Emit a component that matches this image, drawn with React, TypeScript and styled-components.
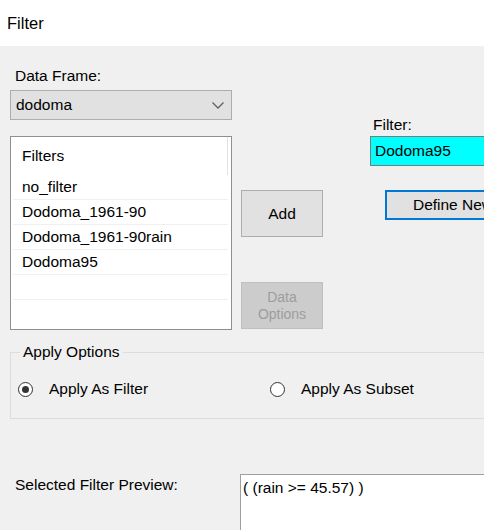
import styled, { createGlobalStyle } from 'styled-components'

// Base: Windows-ish dialog, Arial-width sans
const font = '"Liberation Sans", Arial, sans-serif'

const GlobalStyle = createGlobalStyle`
  html, body {
    margin: 0;
    padding: 0;
    background: #f0f0f0;
  }
  body {
    font-family: ${font};
    font-size: 15.5px;
    color: #000;
  }
`

const Window = styled.div`
  width: 484px;
  height: 530px;
  overflow: hidden;
  background: #f0f0f0;
`

const TitleBar = styled.div`
  height: 46px;
  display: flex;
  align-items: center;
  padding-left: 7px;
  background: #fff;
  font-size: 16.5px;
`

const Content = styled.div`
  padding-left: 10px;
`

const TopSection = styled.div`
  display: flex;
  align-items: flex-start;
`

const LeftColumn = styled.div`
  width: 222px;
  flex-shrink: 0;
  padding-top: 20px;
  display: flex;
  flex-direction: column;
`

const FieldLabel = styled.div`
  line-height: 20px;
  padding-left: 5px;
  margin-bottom: 4px;
`

const Combo = styled.div`
  height: 30px;
  box-sizing: border-box;
  border: 1px solid #adadad;
  background: #e1e1e1;
  display: flex;
  align-items: center;
  justify-content: space-between;
  padding: 0 7px 0 5px;
`

const ListBox = styled.div`
  margin-top: 16px;
  height: 194px;
  box-sizing: border-box;
  border: 1px solid #8f8f8f;
  background: #fff;
`

const ListHeader = styled.div`
  height: 38px;
  width: 217px;
  box-sizing: border-box;
  display: flex;
  align-items: center;
  padding-left: 11px;
  border-right: 1px solid #e3e3e3;
`

const ListRow = styled.div`
  height: 25px;
  box-sizing: border-box;
  margin: 0 3px 0 2px;
  padding-left: 9px;
  display: flex;
  align-items: center;
  border-bottom: 1px solid #f0f0f0;
`

const MiddleColumn = styled.div`
  width: 82px;
  margin-left: 9px;
  flex-shrink: 0;
  padding-top: 144px;
  display: flex;
  flex-direction: column;
  gap: 45px;
`

const Button = styled.div<{ $disabled?: boolean }>`
  height: 47px;
  box-sizing: border-box;
  border: 1px solid ${({ $disabled }) => ($disabled ? '#bfbfbf' : '#adadad')};
  background: ${({ $disabled }) => ($disabled ? '#cccccc' : '#e1e1e1')};
  color: ${({ $disabled }) => ($disabled ? '#9d9d9d' : '#000')};
  font-size: ${({ $disabled }) => ($disabled ? '14px' : '15.5px')};
  line-height: 17px;
  display: flex;
  align-items: center;
  justify-content: center;
  text-align: center;
`

const RightColumn = styled.div`
  margin-left: 47px;
  flex-shrink: 0;
  padding-top: 69px;
  display: flex;
  flex-direction: column;
  align-items: flex-start;
`

const SmallLabel = styled.div`
  line-height: 20px;
  padding-left: 3px;
  margin-bottom: 1px;
`

const TextInput = styled.div`
  width: 160px;
  height: 30px;
  box-sizing: border-box;
  border: 1px solid #7a7a7a;
  border-right: none;
  background: #00ffff;
  display: flex;
  align-items: center;
  padding-left: 4px;
`

const DefineButton = styled.div`
  margin: 24px 0 0 15px;
  width: 136px;
  height: 30px;
  box-sizing: border-box;
  border: 2px solid #0078d7;
  background: #e1e1e1;
  display: flex;
  align-items: center;
  justify-content: center;
  white-space: nowrap;
`

const GroupBox = styled.fieldset`
  margin: 13px 0 0 0;
  padding: 0 0 19px 7px;
  width: 520px;
  box-sizing: border-box;
  border: 1px solid #dcdcdc;
  min-width: 0;
`

const Legend = styled.legend`
  margin-left: 2px;
  padding: 0 3px;
  line-height: 18px;
`

const RadioRow = styled.div`
  padding-top: 18px;
  display: grid;
  grid-template-columns: 252px auto;
`

const RadioLabel = styled.label`
  display: flex;
  align-items: center;
  gap: 16px;
  line-height: 20px;
`

const RadioCircle = styled.span<{ $checked?: boolean }>`
  width: 15px;
  height: 15px;
  box-sizing: border-box;
  border-radius: 50%;
  border: 1px solid #333;
  background: #fff;
  display: flex;
  align-items: center;
  justify-content: center;

  &::after {
    content: '';
    width: 7px;
    height: 7px;
    border-radius: 50%;
    background: #333;
    display: ${({ $checked }) => ($checked ? 'block' : 'none')};
  }
`

const PreviewRow = styled.div`
  margin-top: 55px;
  display: grid;
  grid-template-columns: 230px 260px;
  align-items: start;
`

const PreviewLabel = styled.div`
  padding: 1px 0 0 5px;
  line-height: 20px;
`

const PreviewBox = styled.div`
  height: 80px;
  box-sizing: border-box;
  border: 1px solid #a0a0a0;
  background: #fff;
  padding: 4px 2px;
  line-height: 18px;
`

const filters = ['no_filter', 'Dodoma_1961-90', 'Dodoma_1961-90rain', 'Dodoma95', '']

export default function App() {
  return (
    <Window>
      <GlobalStyle />
      <TitleBar>Filter</TitleBar>
      <Content>
        <TopSection>
          <LeftColumn>
            <FieldLabel>Data Frame:</FieldLabel>
            <Combo>
              <span>dodoma</span>
              <svg width="12" height="7" viewBox="0 0 12 7">
                <polyline points="0.5,0.5 6,6 11.5,0.5" fill="none" stroke="#606060" strokeWidth="1.3" />
              </svg>
            </Combo>
            <ListBox>
              <ListHeader>Filters</ListHeader>
              {filters.map((f, i) => (
                <ListRow key={i}>{f}</ListRow>
              ))}
            </ListBox>
          </LeftColumn>
          <MiddleColumn>
            <Button>Add</Button>
            <Button $disabled>
              Data
              <br />
              Options
            </Button>
          </MiddleColumn>
          <RightColumn>
            <SmallLabel>Filter:</SmallLabel>
            <TextInput>Dodoma95</TextInput>
            <DefineButton>Define New</DefineButton>
          </RightColumn>
        </TopSection>

        <GroupBox>
          <Legend>Apply Options</Legend>
          <RadioRow>
            <RadioLabel>
              <RadioCircle $checked />
              Apply As Filter
            </RadioLabel>
            <RadioLabel>
              <RadioCircle />
              Apply As Subset
            </RadioLabel>
          </RadioRow>
        </GroupBox>

        <PreviewRow>
          <PreviewLabel>Selected Filter Preview:</PreviewLabel>
          <PreviewBox>( (rain &gt;= 45.57) )</PreviewBox>
        </PreviewRow>
      </Content>
    </Window>
  )
}
